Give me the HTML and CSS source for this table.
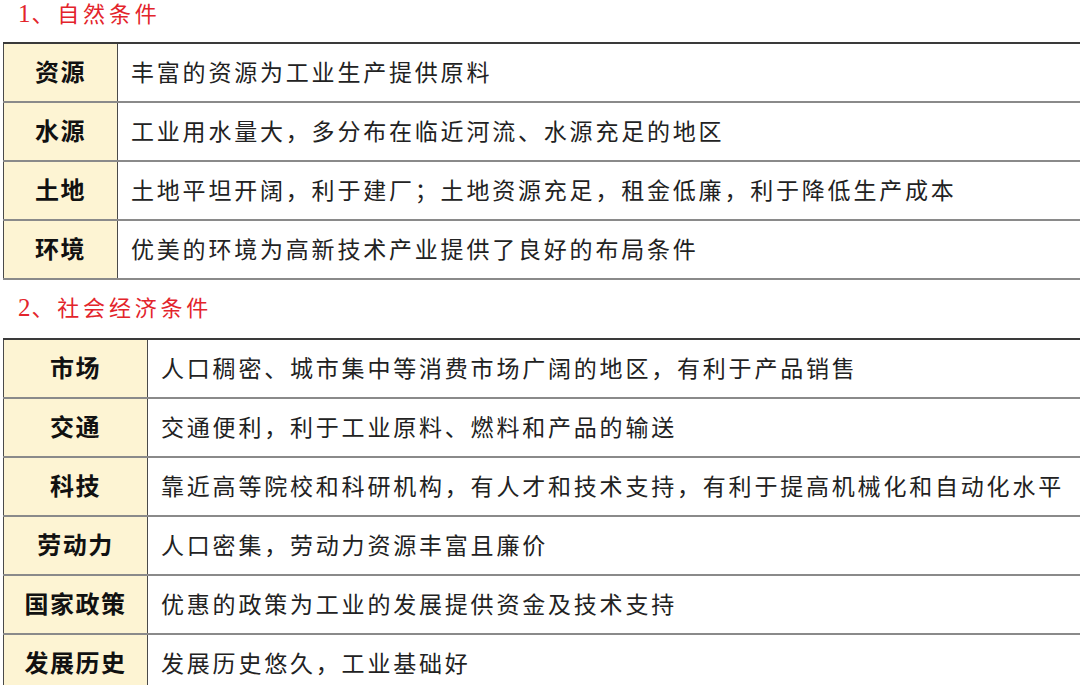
FILE: index.html
```html
<!DOCTYPE html>
<html lang="zh-CN">
<head>
<meta charset="utf-8">
<title>工业区位条件</title>
<link rel="stylesheet" href="styles.css">
</head>
<body>
<div class="page">
  <h2 class="heading heading-first"><span class="num">1</span>、自然条件</h2>
  <table class="factors factors-natural">
    <tr><th>资源</th><td>丰富的资源为工业生产提供原料</td></tr>
    <tr><th>水源</th><td>工业用水量大，多分布在临近河流、水源充足的地区</td></tr>
    <tr><th>土地</th><td>土地平坦开阔，利于建厂；土地资源充足，租金低廉，利于降低生产成本</td></tr>
    <tr><th>环境</th><td>优美的环境为高新技术产业提供了良好的布局条件</td></tr>
  </table>
  <h2 class="heading heading-second"><span class="num">2</span>、社会经济条件</h2>
  <table class="factors factors-social">
    <tr><th>市场</th><td>人口稠密、城市集中等消费市场广阔的地区，有利于产品销售</td></tr>
    <tr><th>交通</th><td>交通便利，利于工业原料、燃料和产品的输送</td></tr>
    <tr><th>科技</th><td>靠近高等院校和科研机构，有人才和技术支持，有利于提高机械化和自动化水平</td></tr>
    <tr><th>劳动力</th><td>人口密集，劳动力资源丰富且廉价</td></tr>
    <tr><th>国家政策</th><td>优惠的政策为工业的发展提供资金及技术支持</td></tr>
    <tr><th>发展历史</th><td>发展历史悠久，工业基础好</td></tr>
  </table>
</div>
</body>
</html>
```
FILE: styles.css
```css
html, body {
  margin: 0;
  padding: 0;
  background: #ffffff;
}
body {
  width: 1080px;
  height: 685px;
  overflow: hidden;
  font-family: "Noto Sans CJK SC", "Liberation Serif", serif;
}
.page {
  padding-left: 3px;
}
.heading {
  margin: 0;
  height: 28px;
  line-height: 28px;
  padding-left: 15px;
  font-family: "Liberation Serif", "Noto Sans CJK SC", serif;
  font-weight: normal;
  font-size: 22px;
  letter-spacing: 3.8px;
  color: #e3242b;
}
.heading .num {
  font-size: 25px;
  letter-spacing: 1px;
}
.heading-first {
  margin-bottom: 14px;
}
.heading-second {
  margin-top: 14px;
  margin-bottom: 16px;
}
.factors {
  border-collapse: collapse;
  width: 1095px;
  table-layout: fixed;
  font-size: 23px;
  letter-spacing: 2.8px;
  color: #222;
}
.factors tr {
  height: 59px;
}
.factors th,
.factors td {
  border-top: 2px solid #8a8a8a;
  border-bottom: 2px solid #8a8a8a;
  border-left: 1px solid #4a4a4a;
  border-right: 1px solid #4a4a4a;
  padding: 0 0 3px 0;
  vertical-align: middle;
  line-height: 30px;
}
.factors tr:first-child th,
.factors tr:first-child td {
  border-top: 2px solid #3a3a3a;
}
.factors th {
  background: #fdf4d3;
  font-weight: bold;
  font-size: 24px;
  color: #111;
  text-align: center;
  letter-spacing: 1.5px;
}
.factors td {
  text-align: left;
  padding-left: 13px;
  white-space: nowrap;
}
.factors-natural th {
  width: 113px;
}
.factors-social th {
  width: 143px;
}
```
